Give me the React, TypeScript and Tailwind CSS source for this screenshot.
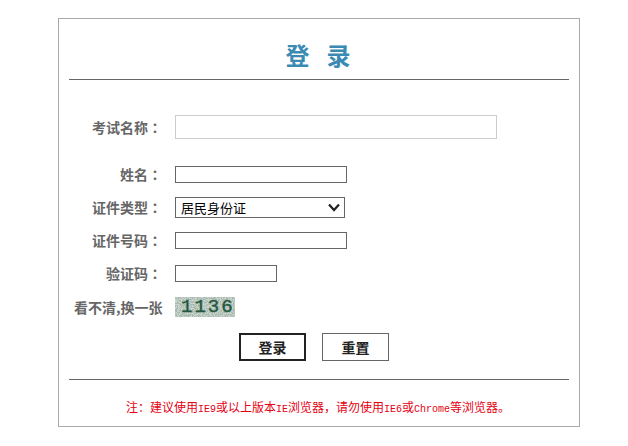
import type { ReactNode } from 'react';

const cjk = 'font-["Noto_Sans_CJK_SC",sans-serif]';

function Row({ label, className = '', children }: { label: string; className?: string; children: ReactNode }) {
  return (
    <div className={`flex shrink-0 items-center ${className}`}>
      <span className="w-[93px] shrink-0 text-right text-[14px] leading-[17px] font-bold text-[#666]">
        {label}
        <span className='font-["Noto_Sans_CJK_TC",sans-serif]'>：</span>
      </span>
      <div className="ml-[13px]">{children}</div>
    </div>
  );
}

function Captcha() {
  return (
    <div className="relative h-[20px] w-[60px] bg-[#cdd6cf]">
      <svg className="absolute inset-0" width="60" height="20">
        <filter id="noise">
          <feTurbulence type="fractalNoise" baseFrequency="0.8" numOctaves="2" seed="4" />
          <feColorMatrix values="0 0 0 0 0.38  0 0 0 0 0.48  0 0 0 0 0.42  5 0 0 0 -2" />
        </filter>
        <rect width="60" height="20" filter="url(#noise)" />
      </svg>
      <span className='absolute top-0 left-[6px] font-["Liberation_Mono",monospace] text-[19px] leading-[20px] tracking-[2px] text-[#24583e] [-webkit-text-stroke:0.4px_#24583e]'>
        1136
      </span>
    </div>
  );
}

export default function App() {
  const mono = 'font-["Liberation_Mono",monospace] text-[10px]';
  return (
    <div className={`h-[446px] w-[628px] bg-white pt-[18px] pl-[58px] ${cjk}`}>
      <div className="flex h-[409px] w-[522px] flex-col border border-[#aaa] px-[10px]">
        <h1 className="mt-[18px] h-[36px] shrink-0 text-center text-[24px] leading-[36px] font-bold tracking-[2px] whitespace-pre text-[#3a8ab4]">
          登  录
        </h1>
        <div className="mt-[6px] h-px shrink-0 bg-[#666]" />

        <Row label="考试名称" className="mt-[35px]">
          <input className="block h-[24px] w-[322px] border border-[#ccc] bg-white" />
        </Row>
        <Row label="姓名" className="mt-[27px]">
          <input className="block h-[17px] w-[172px] border border-[#666] bg-white" />
        </Row>
        <Row label="证件类型" className="mt-[14px]">
          <div className="relative">
            <select className="block h-[21px] w-[170px] appearance-none border border-[#666] bg-white pb-[2px] pl-[5px] text-[13px] text-black">
              <option>居民身份证</option>
            </select>
            <svg className="absolute top-[6px] left-[153px]" width="12" height="9" viewBox="0 0 12 9" fill="none">
              <path d="M1 1.5 L6 7 L11 1.5" stroke="#222" strokeWidth="2.2" />
            </svg>
          </div>
        </Row>
        <Row label="证件号码" className="mt-[14px]">
          <input className="block h-[17px] w-[172px] border border-[#666] bg-white" />
        </Row>
        <Row label="验证码" className="mt-[16px]">
          <input className="block h-[17px] w-[102px] border border-[#666] bg-white" />
        </Row>
        <div className="mt-[15px] flex shrink-0 items-center">
          <span className="ml-[5px] w-[93px] text-[14px] leading-[20px] font-bold whitespace-nowrap text-[#666]">看不清,换一张</span>
          <div className="ml-[8px]">
            <Captcha />
          </div>
        </div>

        <div className="mt-[16px] flex shrink-0 pl-[170px]">
          <button className="h-[28px] w-[67px] border-2 border-[#222] bg-white text-[14px] font-bold text-[#222]">登录</button>
          <button className="ml-[16px] h-[28px] w-[67px] border border-[#666] bg-white text-[14px] font-bold text-[#222]">重置</button>
        </div>

        <div className="mt-[18px] h-px shrink-0 bg-[#666]" />
        <p className="mt-[18px] pr-[2px] text-center text-[12px] leading-[18px] whitespace-nowrap text-[#e60012]">
          注：建议使用<span className={mono}>IE9</span>或以上版本<span className={mono}>IE</span>浏览器，请勿使用<span className={mono}>IE6</span>或<span className={mono}>Chrome</span>等浏览器。
        </p>
      </div>
    </div>
  );
}
